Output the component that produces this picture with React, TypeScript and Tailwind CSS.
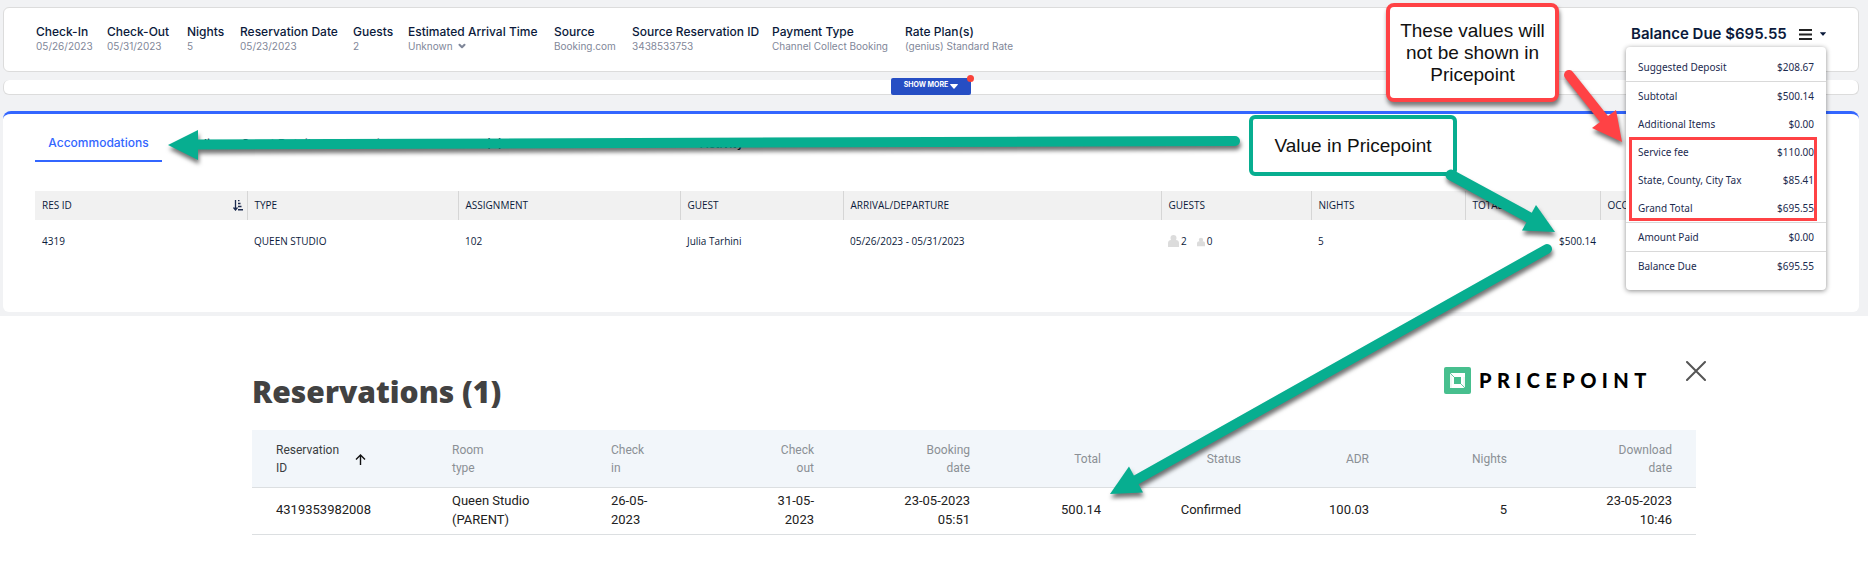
import React from "react";
import { ChevronDown } from "lucide-react";

const details = [
  { label: "Check-In", value: "05/26/2023" },
  { label: "Check-Out", value: "05/31/2023" },
  { label: "Nights", value: "5" },
  { label: "Reservation Date", value: "05/23/2023" },
  { label: "Guests", value: "2" },
  { label: "Estimated Arrival Time", value: "Unknown", menu: true },
  { label: "Source", value: "Booking.com" },
  { label: "Source Reservation ID", value: "3438533753" },
  { label: "Payment Type", value: "Channel Collect Booking" },
  { label: "Rate Plan(s)", value: "(genius) Standard Rate" },
];

const charges = [
  { label: "Suggested Deposit", value: "$208.67", line: true },
  { label: "Subtotal", value: "$500.14" },
  { label: "Additional Items", value: "$0.00" },
  { label: "Service fee", value: "$110.00" },
  { label: "State, County, City Tax", value: "$85.41" },
  { label: "Grand Total", value: "$695.55", line: true },
  { label: "Amount Paid", value: "$0.00", line: true },
  { label: "Balance Due", value: "$695.55" },
];

function Caret({ className }: { className: string }) {
  return (
    <svg viewBox="0 0 8 5" className={className} fill="currentColor" aria-hidden="true">
      <path d="M0.6 0h6.8a.5.5 0 0 1 .4.8L4.5 4.6a.7.7 0 0 1-1 0L.2.8A.5.5 0 0 1 .6 0z" />
    </svg>
  );
}

function Person({ className }: { className: string }) {
  return (
    <svg viewBox="0 0 11 12" className={className} fill="#dcdcdc" aria-hidden="true">
      <ellipse cx="5.5" cy="3" rx="3" ry="3" />
      <path d="M0 12V8C0 6 1.500 5 3 5h5c1.500 0 3 1 3 3v4z" />
    </svg>
  );
}

function BalanceMenu() {
  return (
    <dl className="absolute top-[39px] right-0 z-20 h-[243px] w-[200px] rounded-sm bg-white pt-1.5 font-['Noto_Sans',sans-serif] text-[10px] text-[#1c2b4f] shadow-[0_1px_5px_rgba(0,0,0,0.45)]">
      {charges.map((c) => (
        <div
          key={c.label}
          className={
            c.line
              ? "flex h-[29px] items-center justify-between border-b border-[#d9d9d9] px-3"
              : "flex h-7 items-center justify-between px-3"
          }
        >
          <dt>{c.label}</dt>
          <dd>{c.value}</dd>
        </div>
      ))}
    </dl>
  );
}

function Summary() {
  return (
    <section className="relative flex h-[65px] justify-between rounded-md border border-[#dcdcdc] bg-white pr-8 pl-8">
      <dl className="grid grid-cols-[71px_80px_53px_113px_55px_146px_78px_140px_133px_130px] pt-4 whitespace-nowrap">
        {details.map((d) => (
          <div key={d.label}>
            <dt className="text-[12px] leading-4 font-medium text-[#0b1a3b]">{d.label}</dt>
            <dd className="flex items-center text-[10px] leading-3 text-[#7f8799]">
              {d.value}
              {d.menu && <ChevronDown className="ml-1 size-2.5" strokeWidth={5} />}
            </dd>
          </div>
        ))}
      </dl>
      <div className="relative w-[200px]">
        <button className="flex items-center pt-3.5 pl-[5px] text-[15px] leading-6 font-semibold whitespace-nowrap text-[#0b1a3b]" aria-expanded="true">
          Balance Due $695.55
          <svg viewBox="0 0 13 11" className="ml-3 h-[11px] w-[13px]" fill="#222" aria-hidden="true">
            <path d="M0 0h13v2H0zM0 4.500h13v2H0zM0 9h13v2H0z" />
          </svg>
          <Caret className="ml-2 h-1 w-1.5" />
        </button>
        <BalanceMenu />
      </div>
    </section>
  );
}

const tabs = [
  { name: "Folio", width: "w-[51px]" },
  { name: "Guest Details", width: "w-[108px]" },
  { name: "Credit Cards", width: "w-[100px]" },
  { name: "Notes (0)", width: "w-[251px]" },
  { name: "Activity", width: "w-[60px]" },
];

function Accommodations() {
  const th = "border-r border-[#d6d6d6] px-[7px] text-left font-normal";
  return (
    <section className="h-[201px] rounded-t-lg rounded-b-md border-t-[3px] border-[#3366ff] bg-white pr-[33px] pl-8">
      <nav className="flex items-start pt-[15px] text-[12px] font-medium whitespace-nowrap">
        <a href="#accommodations" className="flex h-[33px] w-[127px] justify-center border-b-2 border-[#3366ff] pt-1 leading-5 text-[#3366ff]">
          Accommodations
        </a>
        <div className="flex pt-[5px] pl-7 leading-5 text-[#0b1a3b]">
          {tabs.map((t) => (
            <a key={t.name} href={"#" + t.name} className={t.width}>
              {t.name}
            </a>
          ))}
        </div>
      </nav>
      <table className="mt-[29px] w-full table-fixed border-collapse font-['Open_Sans',sans-serif] text-[10px] text-[#0b1a3b]">
        <colgroup>
          <col className="w-[212px]" />
          <col className="w-[211px]" />
          <col className="w-[222px]" />
          <col className="w-[163px]" />
          <col className="w-[318px]" />
          <col className="w-[150px]" />
          <col className="w-[154px]" />
          <col className="w-[135px]" />
          <col />
        </colgroup>
        <thead>
          <tr className="h-[29px] bg-[#f1f1f1]">
            <th className="border-r border-[#d6d6d6] pr-1 pl-[7px] font-normal">
              <button className="flex w-full items-center justify-between">
                RES ID
                <svg viewBox="0 0 10 11" className="h-[11px] w-2.5" aria-hidden="true">
                  <path d="M2.500 0v9M0.500 7.500L2.500 10L4.500 7.500" fill="none" stroke="#1c2b4f" strokeWidth="1.300" />
                  <path d="M5 .5h1.500M5 3.500h2.500M5 6.500h3.500M5 9.700h5" stroke="#1c2b4f" strokeWidth="1.500" />
                </svg>
              </button>
            </th>
            <th className={th}>TYPE</th>
            <th className={th}>ASSIGNMENT</th>
            <th className={th}>GUEST</th>
            <th className={th}>ARRIVAL/DEPARTURE</th>
            <th className={th}>GUESTS</th>
            <th className={th}>NIGHTS</th>
            <th className={th}>TOTAL</th>
            <th className={th}>OCC</th>
          </tr>
        </thead>
        <tbody>
          <tr className="h-[43px]">
            <td className="px-[7px]">4319</td>
            <td className="px-[7px]">QUEEN STUDIO</td>
            <td className="px-[7px]">102</td>
            <td className="px-[7px]">Julia Tarhini</td>
            <td className="px-[7px]">05/26/2023 - 05/31/2023</td>
            <td className="px-[7px]">
              <span className="flex items-end">
                <Person className="mb-0.5 h-3 w-[11px]" />
                <span className="ml-0.5">2</span>
                <Person className="mb-0.5 ml-2.5 h-2.5 w-2" />
                <span className="ml-0.5">0</span>
              </span>
            </td>
            <td className="px-[7px]">5</td>
            <td className="pr-1 text-right">$500.14</td>
            <td />
          </tr>
        </tbody>
      </table>
    </section>
  );
}

function Pricepoint() {
  const cell = "pr-6 text-right";
  return (
    <section className="bg-white pr-[172px] pb-[30px] pl-[252px]">
      <header className="flex h-[114px] items-start justify-between">
        <h1 className="pt-[56px] font-['Open_Sans',sans-serif] text-[30px] leading-10 font-extrabold text-[#424242]">
          Reservations (1)
        </h1>
        <div className="-mr-2.5 flex items-start">
          <div className="flex items-center pt-[51px]">
            <svg viewBox="0 0 27 27" className="size-[27px]" aria-hidden="true">
              <rect width="27" height="27" rx="2" fill="#47bf8e" />
              <rect x="6" y="6" width="15" height="15" fill="#fff" />
              <rect x="10" y="10" width="7" height="7" fill="#47bf8e" />
              <path d="M6 6l4 4M17 17l4 4" stroke="#47bf8e" strokeWidth=".8" />
              <path d="M6 6h1v15M21 21h-1V10" stroke="#47bf8e" strokeOpacity=".3" fill="none" strokeWidth=".6" />
            </svg>
            <span className="ml-2 w-[207px] font-[Lato,sans-serif] text-[20px] leading-[27px] font-black tracking-[0.27em] text-black">
              PRICEPOINT
            </span>
          </div>
          <button className="mt-[45px]" aria-label="Close">
            <svg viewBox="0 0 20 20" className="size-5" fill="none" stroke="#555" strokeWidth="2" strokeLinecap="round" aria-hidden="true">
              <path d="M1 1l18 18M19 1L1 19" />
            </svg>
          </button>
        </div>
      </header>
      <table className="w-full table-fixed border-collapse font-[Roboto,sans-serif] text-[13px] leading-[19px] text-[#212121]">
        <colgroup>
          <col className="w-[176px]" />
          <col className="w-[159px]" />
          <col className="w-[125px]" />
          <col className="w-[126px]" />
          <col className="w-[156px]" />
          <col className="w-[131px]" />
          <col className="w-[140px]" />
          <col className="w-[128px]" />
          <col className="w-[138px]" />
          <col className="w-[165px]" />
        </colgroup>
        <thead>
          <tr className="h-[57px] border-b border-[#dcdfe1] bg-[#f2f6fa] text-[12px] leading-[18px] text-[#8b9095] [&>th]:pt-0.5 [&>th]:font-normal">
            <th className="pl-6 text-left text-[#3a3d40]">
              <button className="flex items-center text-left">
                <span>Reservation<br />ID</span>
                <svg viewBox="0 0 11 11" className="ml-4 size-[11px]" fill="none" stroke="#111" strokeWidth="1.400" aria-hidden="true">
                  <path d="M5.500 11V1M1 5.500L5.500 1L10 5.500" />
                </svg>
              </button>
            </th>
            <th className="pl-6 text-left">Room<br />type</th>
            <th className="pl-6 text-left">Check<br />in</th>
            <th className={cell}>Check<br />out</th>
            <th className={cell}>Booking<br />date</th>
            <th className={cell}>Total</th>
            <th className={cell}>Status</th>
            <th className={cell}>ADR</th>
            <th className={cell}>Nights</th>
            <th className={cell}>Download<br />date</th>
          </tr>
        </thead>
        <tbody>
          <tr className="h-[47px] border-b border-[#dcdfe1] [&>td]:pb-0.5">
            <td className="pl-6">4319353982008</td>
            <td className="pl-6">Queen Studio<br />(PARENT)</td>
            <td className="pl-6">26-05-<br />2023</td>
            <td className={cell}>31-05-<br />2023</td>
            <td className={cell}>23-05-2023<br />05:51</td>
            <td className={cell}>500.14</td>
            <td className={cell}>Confirmed</td>
            <td className={cell}>100.03</td>
            <td className={cell}>5</td>
            <td className={cell}>23-05-2023<br />10:46</td>
          </tr>
        </tbody>
      </table>
    </section>
  );
}

function Annotations() {
  return (
    <div className="pointer-events-none absolute inset-0 z-30 font-['Liberation_Sans',sans-serif] text-[19px] leading-[22px] text-[#111]">
      <p className="absolute top-[115px] left-[1249px] flex h-[61px] w-[208px] items-center justify-center rounded-md border-4 border-[#07ae90] bg-white">
        Value in Pricepoint
      </p>
      <p className="absolute top-[3px] left-[1386px] flex h-[99px] w-[173px] items-center justify-center rounded-lg border-4 border-[#ff4245] bg-white text-center shadow-[1px_4px_4px_rgba(0,0,0,0.5)]">
        These values will<br />not be shown in<br />Pricepoint
      </p>
      <div className="absolute top-[137px] left-[1629px] h-[84px] w-[188px] border-[3px] border-[#ff4245]" />
      <svg viewBox="0 0 1868 565" className="absolute top-0 left-0 h-[565px] w-[1868px] drop-shadow-[1px_4px_2px_rgba(0,0,0,0.55)]" aria-hidden="true">
        <g stroke="#07ae90" fill="#07ae90" strokeLinecap="round">
          <path d="M196 144.500L1235 141" strokeWidth="10" />
          <path d="M168 145L198 130V160z" stroke="none" />
          <path d="M1451 175L1530 218" strokeWidth="11" />
          <path d="M1555 232L1536 205L1522 230.500z" stroke="none" />
          <path d="M1547 249L1136 480" strokeWidth="10" />
          <path d="M1110 494L1129 466.500L1143 492.500z" stroke="none" />
        </g>
        <g stroke="#ff4245" fill="#ff4245" strokeLinecap="round">
          <path d="M1569 75L1604 119" strokeWidth="10" />
          <path d="M1622 142L1616 110L1592 128z" stroke="none" />
        </g>
      </svg>
    </div>
  );
}

export default function App() {
  return (
    <div className="relative min-h-screen overflow-hidden bg-white font-[Inter,sans-serif]">
      <main>
        <div className="bg-[#f1f2f4] pt-[7px] pr-[9px] pb-1 pl-[3px]">
          <Summary />
          <div className="relative mt-2 flex h-[15px] items-end justify-center rounded-md border border-t-0 border-[#dcdcdc] bg-white">
            <button className="relative -mb-px flex h-[17px] w-20 items-center justify-center gap-0.5 rounded-xs bg-[#264ec4] pb-0.5 text-[7px] font-bold whitespace-nowrap text-white">
              SHOW MORE
              <Caret className="mt-0.5 h-[5px] w-2" />
              <span className="absolute -top-[3px] -right-[3px] size-[7px] rounded-full bg-[#f9423a]" />
            </button>
          </div>
          <div className="mt-4">
            <Accommodations />
          </div>
        </div>
        <Pricepoint />
      </main>
      <Annotations />
    </div>
  );
}
